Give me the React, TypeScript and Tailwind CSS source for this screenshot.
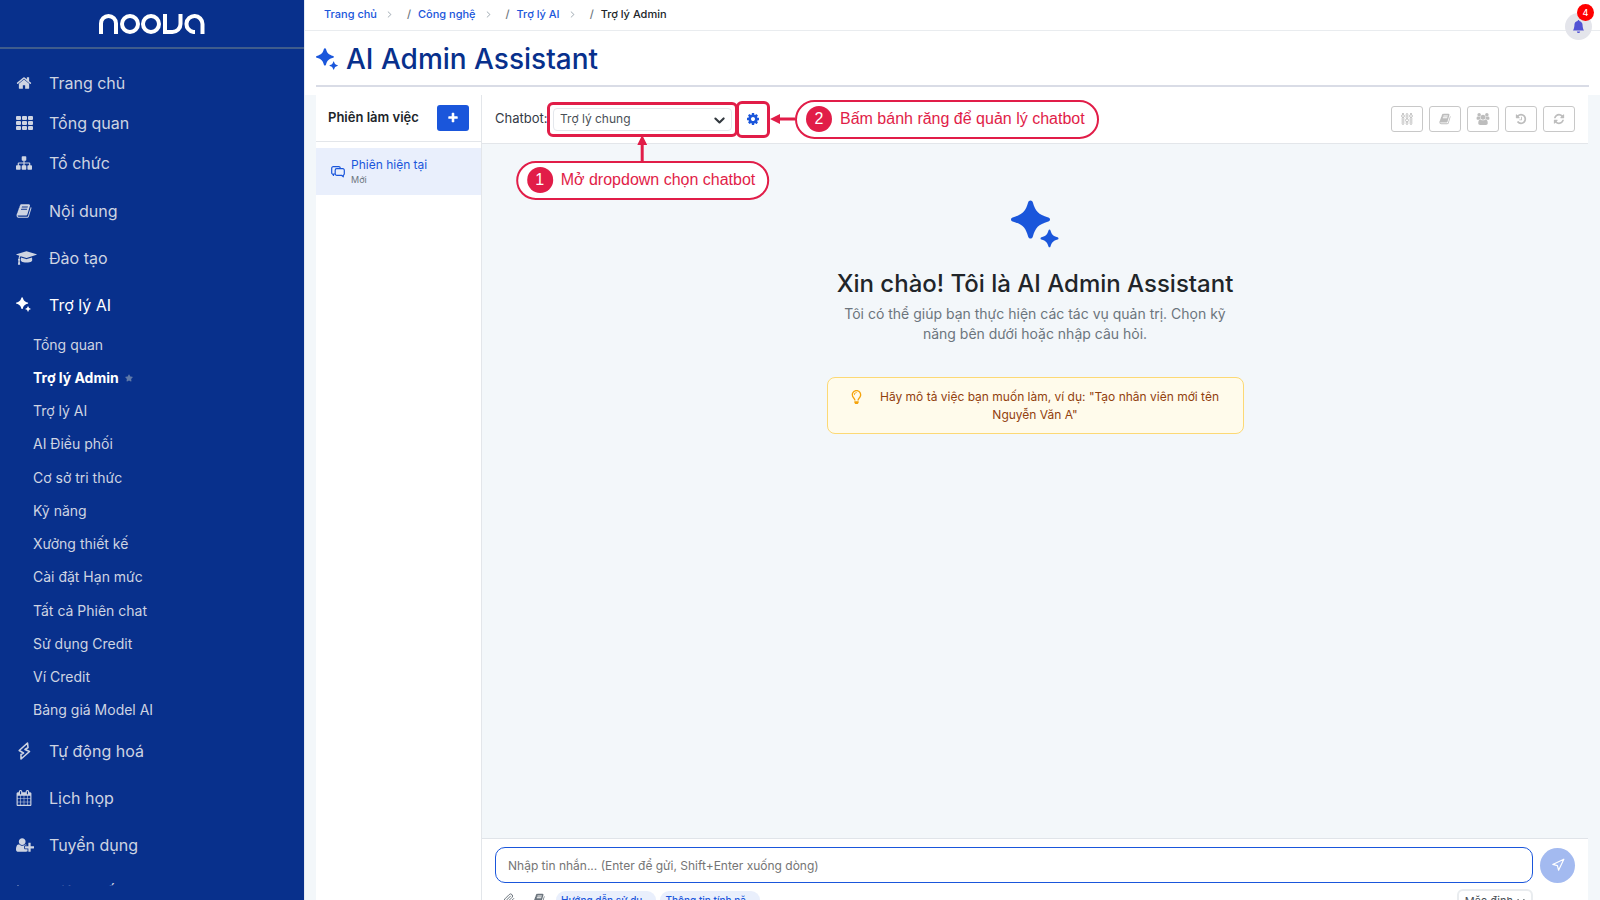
import { useState } from "react";
import type { ReactNode } from "react";
import { BsBellFill, BsChevronDown, BsChevronRight } from "react-icons/bs";
import { FaRegLightbulb, FaStar } from "react-icons/fa";
import { LuChartLine, LuNavigation, LuPaperclip } from "react-icons/lu";

const paths = {
  home: "M1472 992v480q0 26-19 45t-45 19h-384v-384h-256v384h-384q-26 0-45-19t-19-45v-480q0-1 .5-3t.5-3l575-474 575 474q1 2 1 6zm223-69l-62 74q-8 9-21 11h-3q-13 0-21-7l-692-577-692 577q-12 8-24 7-13-2-21-11l-62-74q-8-10-7-23.5t11-21.5l719-599q32-26 76-26t76 26l244 204v-195q0-14 9-23t23-9h192q14 0 23 9t9 23v408l219 182q10 8 11 21.5t-7 23.5z",
  plus: "M1600 736v192q0 40-28 68t-68 28h-416v416q0 40-28 68t-68 28h-192q-40 0-68-28t-28-68v-416h-416q-40 0-68-28t-28-68v-192q0-40 28-68t68-28h416v-416q0-40 28-68t68-28h192q40 0 68 28t28 68v416h416q40 0 68 28t28 68z",
  sitemap:
    "M1792 1248v320q0 40-28 68t-68 28h-320q-40 0-68-28t-28-68v-320q0-40 28-68t68-28h96v-192h-512v192h96q40 0 68 28t28 68v320q0 40-28 68t-68 28h-320q-40 0-68-28t-28-68v-320q0-40 28-68t68-28h96v-192h-512v192h96q40 0 68 28t28 68v320q0 40-28 68t-68 28h-320q-40 0-68-28t-28-68v-320q0-40 28-68t68-28h96v-192q0-52 38-90t90-38h512v-192h-96q-40 0-68-28t-28-68v-320q0-40 28-68t68-28h320q40 0 68 28t28 68v320q0 40-28 68t-68 28h-96v192h512q52 0 90 38t38 90v192h96q40 0 68 28t28 68z",
  book: "M1703 478q40 57 18 129l-275 906q-19 64-76.5 107.5t-122.5 43.5h-923q-77 0-148.5-53.5t-99.5-131.5q-24-67-2-127 0-4 3-27t4-37q1-8-3-21.5t-3-19.5q2-11 8-21t16.5-23.5 16.5-23.5q23-38 45-91.5t30-91.5q3-10 .5-30t-.5-28q3-11 17-28t17-23q21-36 42-92t25-90q1-9-2.5-32t.5-28q4-13 22-30.5t22-22.5q19-26 42.5-84.5t27.5-96.5q1-8-3-25.5t-2-26.5q2-8 9-18t18-23 17-21q8-12 16.5-30.5t15-35 16-36 19.5-32 26.5-23.5 36-11.5 47.5 5.5l-1 3q38-9 51-9h761q74 0 114 56t18 130l-274 906q-36 119-71.5 153.5t-128.5 34.5h-869q-27 0-38 15-11 16-1 43 24 70 144 70h923q29 0 56-15.5t35-41.5l300-987q7-22 5-57 38 15 59 43zm-1064 2q-4 13 2 22.5t20 9.5h608q13 0 25.5-9.5t16.5-22.5l21-64q4-13-2-22.5t-20-9.5h-608q-13 0-25.5 9.5t-16.5 22.5zm-83 256q-4 13 2 22.5t20 9.5h608q13 0 25.5-9.5t16.5-22.5l21-64q4-13-2-22.5t-20-9.5h-608q-13 0-25.5 9.5t-16.5 22.5z",
  cap: "M1774 836l18 316q4 69-82 128t-235 93.5-323 34.5-323-34.5-235-93.5-82-128l18-316 574 181q22 7 48 7t48-7zm530-324q0 23-22 31l-1120 352q-4 1-10 1t-10-1l-652-206q-43 34-71 111.5t-34 178.5q63 36 63 109 0 69-58 107l58 433q2 14-8 25-9 11-24 11h-192q-15 0-24-11-10-11-8-25l58-433q-58-38-58-107 0-73 65-111 11-207 98-330l-333-104q-22-8-22-31t22-31l1120-352q4-1 10-1t10 1l1120 352q22 8 22 31z",
  calendar:
    "M192 1664h288v-288h-288v288zm352 0h320v-288h-320v288zm-352-352h288v-320h-288v320zm352 0h320v-320h-320v320zm-352-384h288v-288h-288v288zm736 736h320v-288h-320v288zm-384-736h320v-288h-320v288zm768 736h288v-288h-288v288zm-384-352h320v-320h-320v320zm-352-864v-288q0-13-9.5-22.5t-22.5-9.5h-64q-13 0-22.5 9.5t-9.5 22.5v288q0 13 9.5 22.5t22.5 9.5h64q13 0 22.5-9.5t9.5-22.5zm736 864h288v-320h-288v320zm-384-384h320v-288h-320v288zm384 0h288v-288h-288v288zm32-480v-288q0-13-9.5-22.5t-22.5-9.5h-64q-13 0-22.5 9.5t-9.5 22.5v288q0 13 9.5 22.5t22.5 9.5h64q13 0 22.5-9.5t9.5-22.5zm384-64v1280q0 52-38 90t-90 38h-1408q-52 0-90-38t-38-90v-1280q0-52 38-90t90-38h128v-96q0-66 47-113t113-47h64q66 0 113 47t47 113v96h384v-96q0-66 47-113t113-47h64q66 0 113 47t47 113v96h128q52 0 90 38t38 90z",
  userPlus:
    "M704 896q-159 0-271.5-112.5t-112.5-271.5 112.5-271.5 271.5-112.5 271.5 112.5 112.5 271.5-112.5 271.5-271.5 112.5zm960 128h352q13 0 22.5 9.5t9.5 22.5v192q0 13-9.5 22.5t-22.5 9.5h-352v352q0 13-9.5 22.5t-22.5 9.5h-192q-13 0-22.5-9.5t-9.5-22.5v-352h-352q-13 0-22.5-9.5t-9.5-22.5v-192q0-13 9.5-22.5t22.5-9.5h352v-352q0-13 9.5-22.5t22.5-9.5h192q13 0 22.5 9.5t9.5 22.5v352zm-736 224q0 52 38 90t90 38h256v238q-68 50-171 50h-874q-121 0-194-69t-73-190q0-53 3.5-103.5t14-109 26.5-108.5 43-97.5 62-81 85.5-53.5 111.5-20q19 0 39 17 79 61 154.5 91.5t164.5 30.5 164.5-30.5 154.5-91.5q20-17 39-17 132 0 217 96h-223q-52 0-90 38t-38 90v192z",
  cog: "M1152 896q0-106-75-181t-181-75-181 75-75 181 75 181 181 75 181-75 75-181zm512-109v222q0 12-8 23t-20 13l-185 28q-19 54-39 91 35 50 107 138 10 12 10 25t-9 23q-27 37-99 108t-94 71q-12 0-26-9l-138-108q-44 23-91 38-16 136-29 186-7 28-36 28h-222q-14 0-24.5-8.5t-11.5-21.5l-28-184q-49-16-90-37l-141 107q-10 9-25 9-14 0-25-11-126-114-165-168-7-10-7-23 0-12 8-23 15-21 51-66.5t54-70.5q-27-50-41-99l-183-27q-13-2-21-12.5t-8-23.5v-222q0-12 8-23t19-13l186-28q14-46 39-92-40-57-107-138-10-12-10-24 0-10 9-23 26-36 98.5-107.5t94.5-71.5q13 0 26 10l138 107q44-23 91-38 16-136 29-186 7-28 36-28h222q14 0 24.5 8.5t11.5 21.5l28 184q49 16 90 37l142-107q9-9 24-9 13 0 25 10 129 119 165 170 7 8 7 22 0 12-8 23-15 21-51 66.5t-54 70.5q26 50 41 98l183 28q13 2 21 12.5t8 23.5z",
  refresh:
    "M1639 1056q0 5-1 7-64 268-268 434.5t-478 166.5q-146 0-282.5-55t-243.5-157l-129 129q-19 19-45 19t-45-19-19-45v-448q0-26 19-45t45-19h448q26 0 45 19t19 45-19 45l-137 137q71 66 161 102t187 36q134 0 250-65t186-179q11-17 53-117 8-23 30-23h192q13 0 22.5 9.5t9.5 22.5zm25-800v448q0 26-19 45t-45 19h-448q-26 0-45-19t-19-45 19-45l138-138q-148-137-349-137-134 0-250 65t-186 179q-11 17-53 117-8 23-30 23h-199q-13 0-22.5-9.5t-9.5-22.5v-7q65-268 270-434.5t480-166.5q146 0 284 55.5t245 156.5l130-129q19-19 45-19t45 19 19 45z",
  history:
    "M1664 896q0 156-61 298t-164 245-245 164-298 61q-172 0-327-72.5t-264-204.5q-7-10-6.5-22.5t8.5-20.5l137-138q10-9 25-9 16 2 23 12 73 95 179 147t225 52q104 0 198.5-40.5t163.5-109.5 109.5-163.5 40.5-198.5-40.5-198.5-109.5-163.5-163.5-109.5-198.5-40.5q-98 0-188 35.5t-160 101.5l137 138q31 30 14 69-17 40-59 40h-448q-26 0-45-19t-19-45v-448q0-42 40-59 39-17 69 14l130 129q107-101 244.5-156.5t284.5-55.5q156 0 298 61t245 164 164 245 61 298zm-640-288v448q0 14-9 23t-23 9h-320q-14 0-23-9t-9-23v-64q0-14 9-23t23-9h224v-352q0-14 9-23t23-9h64q14 0 23 9t9 23z",
  users:
    "M657 896q-162 5-265 128h-134q-82 0-138-40.5t-56-118.5q0-353 124-353 6 0 43.5 21t97.5 42.5 119 21.5q67 0 133-23-5 37-5 66 0 139 81 256zm1071 637q0 120-73 189.5t-194 69.5h-874q-121 0-194-69.5t-73-189.5q0-53 3.5-103.5t14-109 26.5-108.5 43-97.5 62-81 85.5-53.5 111.5-20q10 0 43 21.5t73 48 107 48 135 21.5 135-21.5 107-48 73-48 43-21.5q61 0 111.5 20t85.5 53.5 62 81 43 97.5 26.5 108.5 14 109 3.5 103.5zm-1024-1277q0 106-75 181t-181 75-181-75-75-181 75-181 181-75 181 75 75 181zm704 384q0 159-112.5 271.5t-271.5 112.5-271.5-112.5-112.5-271.5 112.5-271.5 271.5-112.5 271.5 112.5 112.5 271.5zm576 225q0 78-56 118.5t-138 40.5h-134q-103-123-265-128 81-117 81-256 0-29-5-66 66 23 133 23 59 0 119-21.5t97.5-42.5 43.5-21q124 0 124 353zm-128-609q0 106-75 181t-181 75-181-75-75-181 75-181 181-75 181 75 75 181z",
};

interface GlyphProps {
  name: keyof typeof paths;
  width?: number;
  className?: string;
}

function Glyph({ name, width = 1792, className }: GlyphProps) {
  return (
    <svg viewBox={`0 0 ${width} 1792`} className={className} fill="currentColor" aria-hidden="true">
      <path d={paths[name]} />
    </svg>
  );
}

function Sparkles({ className }: { className?: string }) {
  return (
    <svg viewBox="0 0 48 48" className={className} fill="currentColor" aria-hidden="true">
      <path d="M19.500 0.500c1.200 0 1.900.700 2.300 1.800 2.700 9.100 5.200 12.100 15.500 15.200 1 .3 1.700 1 1.700 2s-.7 1.700-1.700 2c-10.300 3.100-12.800 6.100-15.500 15.200-.4 1.100-1.100 1.800-2.300 1.800s-1.900-.7-2.300-1.800c-2.700-9.100-5.200-12.100-15.500-15.200-1-.3-1.700-1-1.700-2s.7-1.700 1.700-2c10.300-3.100 12.800-6.100 15.500-15.200.4-1.100 1.100-1.800 2.300-1.800z" />
      <path d="M38.500 29.500c.5 0 .8.300 1 .9 1.400 4.300 2.500 5.400 7.100 6.900.6.200.9.600.9 1.100s-.3.900-.9 1.100c-4.600 1.500-5.700 2.600-7.100 6.900-.2.600-.5.900-1 .9s-.8-.3-1-.9c-1.400-4.300-2.500-5.400-7.100-6.900-.6-.2-.9-.6-.9-1.100s.3-.9.900-1.100c4.600-1.500 5.700-2.600 7.100-6.900.2-.6.500-.9 1-.9z" />
    </svg>
  );
}

function GridIcon() {
  return (
    <svg viewBox="0 0 17 14" className="w-[17px] h-[14px]" fill="currentColor" aria-hidden="true">
      {[0, 5, 10].map((y) =>
        [0, 6, 12].map((x) => <rect key={`${x}-${y}`} x={x} y={y} width="5" height="4" rx="1" />),
      )}
    </svg>
  );
}

function BoltIcon() {
  return (
    <svg viewBox="0 0 16 18" className="w-4 h-[18px]" fill="none" stroke="currentColor" strokeWidth="1.600" strokeLinejoin="round" aria-hidden="true">
      <path d="M11.500 1 3.200 8.500 7.500 11l-2.500 1.500v4.500L13.500 9.500 9 7.500l3-2z" />
    </svg>
  );
}

function ChatsIcon() {
  return (
    <svg viewBox="0 0 14 12" className="w-[14px] h-3" fill="none" stroke="currentColor" strokeWidth="1.200" strokeLinejoin="round" aria-hidden="true">
      <path d="M4 8H2.500v1.500L1.500 8A1 1 0 0 1 .700 7V2.200A1.500 1.500 0 0 1 2.200.700h5.600A1.500 1.500 0 0 1 9.300 2" />
      <path d="M5.700 2.700h6.100a1.500 1.500 0 0 1 1.500 1.500v3.600a1.500 1.500 0 0 1-1 1.400v1.600L10.500 9.300H5.700a1.500 1.500 0 0 1-1.500-1.500V4.200a1.500 1.500 0 0 1 1.500-1.500z" />
    </svg>
  );
}

function SlidersIcon() {
  return (
    <svg viewBox="0 0 12 12" className="w-3 h-3" fill="none" stroke="currentColor" strokeWidth="0.900" aria-hidden="true">
      <rect x="1.200" y="4.500" width="1.600" height="7" rx="0.800" />
      <rect x="5.200" y="0.500" width="1.600" height="5" rx="0.800" />
      <rect x="5.200" y="9" width="1.600" height="2.500" rx="0.800" />
      <rect x="9.200" y="4.500" width="1.600" height="7" rx="0.800" />
      <path d="M2 0v1.500M10 0v1.500" strokeWidth="1.600" />
      <circle cx="2" cy="3" r="1.400" />
      <circle cx="6" cy="7.300" r="1.500" />
      <circle cx="10" cy="3" r="1.400" />
    </svg>
  );
}

function Logo() {
  return (
    <svg viewBox="0 0 106 20" className="w-[106px] h-5" fill="none" stroke="white" strokeWidth="4" role="img" aria-label="noova">
      <path d="M2 20V9.500a7.500 7.500 0 0 1 15 0V20" />
      <circle cx="31" cy="10" r="8" />
      <circle cx="52" cy="10" r="8" />
      <path d="M66 0v18h7.500a8 8 0 0 0 8-8V0" />
      <path d="M96 18h-1.500a8 8 0 1 1 9-8v10" />
    </svg>
  );
}

interface MenuItem {
  label: string;
  icon: ReactNode;
}

const topMenu: MenuItem[] = [
  { label: "Trang chủ", icon: <Glyph name="home" className="w-4 h-4" /> },
  { label: "Tổng quan", icon: <GridIcon /> },
  { label: "Tổ chức", icon: <Glyph name="sitemap" className="w-4 h-4" /> },
];

const contentMenu: MenuItem[] = [
  { label: "Nội dung", icon: <Glyph name="book" className="w-4 h-4" /> },
  { label: "Đào tạo", icon: <Glyph name="cap" width={2304} className="w-[21px] h-4" /> },
  { label: "Trợ lý AI", icon: <Sparkles className="w-[15px] h-[15px]" /> },
];

const assistantMenu = [
  "Tổng quan",
  "Trợ lý Admin",
  "Trợ lý AI",
  "AI Điều phối",
  "Cơ sở tri thức",
  "Kỹ năng",
  "Xưởng thiết kế",
  "Cài đặt Hạn mức",
  "Tất cả Phiên chat",
  "Sử dụng Credit",
  "Ví Credit",
  "Bảng giá Model AI",
];

const bottomMenu: MenuItem[] = [
  { label: "Tự động hoá", icon: <BoltIcon /> },
  { label: "Lịch họp", icon: <Glyph name="calendar" className="w-4 h-4" /> },
  { label: "Tuyển dụng", icon: <Glyph name="userPlus" width={2048} className="w-[18px] h-4" /> },
  { label: "Hiệu suất", icon: <LuChartLine className="w-4 h-4" /> },
];

const crumbs = ["Trang chủ", "Công nghệ", "Trợ lý AI"];

const toolbar = [
  { label: "Tuỳ chỉnh", icon: <SlidersIcon /> },
  { label: "Tài liệu", icon: <Glyph name="book" className="w-3 h-3" /> },
  { label: "Nhóm", icon: <Glyph name="users" width={2048} className="w-[14px] h-3" /> },
  { label: "Lịch sử", icon: <Glyph name="history" className="w-3 h-3" /> },
  { label: "Làm mới", icon: <Glyph name="refresh" className="w-3 h-3" /> },
];

function MenuLink({ item, size }: { item: MenuItem; size: "compact" | "regular" }) {
  const active = item.label === "Trợ lý AI";
  return (
    <li>
      <a
        href="#"
        className={`flex items-center pl-4 text-base ${size === "compact" ? "h-10" : "h-[47px]"} ${active ? "text-white" : "text-[#ced4e2]"}`}
      >
        <span className="w-[33px] shrink-0">{item.icon}</span>
        {item.label}
      </a>
    </li>
  );
}

function Sidebar() {
  return (
    <aside className="w-[304px] shrink-0 flex flex-col bg-[#08308c] pb-[14px]">
      <div className="h-[49px] shrink-0 flex items-center justify-center border-b-2 border-[#3f5c8c]">
        <Logo />
      </div>
      <nav className="flex-1 min-h-0 overflow-hidden pt-[14px]">
        <ul>
          {topMenu.map((item) => (
            <MenuLink key={item.label} item={item} size="compact" />
          ))}
        </ul>
        <ul className="mt-1">
          {contentMenu.map((item) => (
            <MenuLink key={item.label} item={item} size="regular" />
          ))}
        </ul>
        <ul className="h-[399px] grid auto-rows-fr">
          {assistantMenu.map((label) => (
            <li key={label} className="flex items-center gap-[6px] pl-[33px] text-sm text-[#ced4e2]">
              <a href="#" className={label === "Trợ lý Admin" ? "font-bold text-white" : ""}>
                {label}
              </a>
              {label === "Trợ lý Admin" && <FaStar className="w-2 h-2 text-[#5f79a8]" />}
            </li>
          ))}
        </ul>
        <ul>
          {bottomMenu.map((item) => (
            <MenuLink key={item.label} item={item} size="regular" />
          ))}
        </ul>
      </nav>
    </aside>
  );
}

function Callout({ step, children }: { step: number; children: ReactNode }) {
  return (
    <div className="h-[39px] flex items-center gap-2 pl-[9px] pr-3 rounded-full border-2 border-[#e11d48] bg-white whitespace-nowrap font-['Liberation_Sans',sans-serif] text-base text-[#e11d48]">
      <span className="w-[26px] h-[26px] flex items-center justify-center rounded-full bg-[#e11d48] text-white">
        {step}
      </span>
      {children}
    </div>
  );
}

function ChatbotPicker() {
  const [bot, setBot] = useState("general");

  return (
    <div className="flex items-center">
      <label htmlFor="chatbot" className="w-[52px] text-[13px] text-[#343a46]">
        Chatbot:
      </label>
      {/* Step 1: chatbot dropdown */}
      <div className="relative w-[191px] h-[35px] p-[3px] rounded-md border-3 border-[#e11d48]">
        <select
          id="chatbot"
          value={bot}
          onChange={(e) => setBot(e.target.value)}
          className="block w-full h-full appearance-none rounded border border-[#e4e7ec] bg-white pl-[6px] text-xs text-[#495057]"
        >
          <option value="general">Trợ lý chung</option>
        </select>
        <BsChevronDown className="absolute right-[10px] top-[10px] w-[11px] h-[11px] stroke-2 text-[#343a40] pointer-events-none" />
        <div className="absolute z-10 top-full left-1/2 -translate-x-1/2 flex flex-col items-center">
          <svg viewBox="0 0 10 27" className="w-[10px] h-[27px]" fill="#e11d48" aria-hidden="true">
            <path d="M5 1l5 10H6.500v16h-3V11H0z" />
          </svg>
          <Callout step={1}>Mở dropdown chọn chatbot</Callout>
        </div>
      </div>
      {/* Step 2: chatbot settings */}
      <div className="relative -ml-[2px] w-[34px] h-[37px] rounded-md border-3 border-[#e11d48]">
        <button type="button" aria-label="Quản lý chatbot" className="w-full h-full flex items-center justify-center text-[#1a56db]">
          <Glyph name="cog" className="w-[14px] h-[14px]" />
        </button>
        <div className="absolute z-10 left-full inset-y-0 flex items-center">
          <svg viewBox="0 0 28 10" className="w-7 h-[10px]" fill="#e11d48" aria-hidden="true">
            <path d="M3 5l10-5v3.500h15v3H13V10z" />
          </svg>
          <Callout step={2}>Bấm bánh răng để quản lý chatbot</Callout>
        </div>
      </div>
    </div>
  );
}

function Sessions() {
  return (
    <section className="w-[166px] shrink-0 border-r border-[#e3e6ea] bg-white">
      <div className="h-[47px] flex items-center justify-between px-3 border-b border-[#e3e6ea]">
        <h2 className="text-[13px] font-semibold text-[#212529]">Phiên làm việc</h2>
        <button type="button" aria-label="Thêm phiên" className="w-8 h-[26px] flex items-center justify-center rounded-[3px] bg-[#1a56db] text-white">
          <Glyph name="plus" className="w-3 h-3" />
        </button>
      </div>
      <button type="button" className="mt-[6px] w-full h-[47px] flex items-center gap-[6px] pl-[15px] bg-[#e9effc] text-left text-[#1a56db]">
        <ChatsIcon />
        <span className="flex flex-col">
          <span className="text-xs leading-4">Phiên hiện tại</span>
          <span className="text-[9px] leading-[13px] text-[#6c757d]">Mới</span>
        </span>
      </button>
    </section>
  );
}

function Composer() {
  const [message, setMessage] = useState("");

  return (
    <form className="h-[86px] shrink-0 border-t border-[#e0e4e9] bg-white px-[13px] pt-2" onSubmit={(e) => e.preventDefault()}>
      <div className="flex items-center gap-[7px]">
        <input
          type="text"
          aria-label="Tin nhắn"
          value={message}
          onChange={(e) => setMessage(e.target.value)}
          placeholder="Nhập tin nhắn... (Enter để gửi, Shift+Enter xuống dòng)"
          className="flex-1 min-w-0 h-9 px-3 rounded-[10px] border border-[#1a56db] text-xs text-[#212529] placeholder:text-[#757575] outline-none"
        />
        <button type="submit" aria-label="Gửi" className="w-[35px] h-[35px] flex items-center justify-center rounded-full bg-[#a3baf0] text-white">
          <LuNavigation className="w-[14px] h-[14px]" />
        </button>
      </div>
      <div className="mt-[6px] mr-[42px] flex items-start justify-between">
        <div className="flex items-start gap-1 pl-2 pt-[2px] text-[10px] font-medium text-[#1a56db]">
          <LuPaperclip className="mt-[2px] w-3 h-3 text-[#6c757d]" />
          <Glyph name="book" className="mt-[2px] ml-[14px] mr-[7px] w-3 h-3 text-[#6c757d]" />
          <span className="h-[18px] px-[5px] rounded-full bg-[#e9effc] leading-[18px]">Hướng dẫn sử dụ...</span>
          <span className="h-[18px] px-[5px] rounded-full bg-[#e9effc] leading-[18px]">Thông tin tính nă...</span>
        </div>
        <button type="button" className="h-6 px-[6px] flex items-center gap-1 rounded-md border-2 border-[#e9ecef] text-[11px] text-[#495057]">
          Mặc định
          <BsChevronDown className="w-2 h-2 stroke-1" />
        </button>
      </div>
    </form>
  );
}

export default function App() {
  return (
    <div className="h-screen flex overflow-hidden bg-[#f3f7fa] font-[Inter,'Noto_Sans',sans-serif]">
      <Sidebar />

      <main className="flex-1 min-w-0 border-l border-[#e4e9f2]">
        <header className="relative h-[95px] bg-white">
          <nav aria-label="Breadcrumb" className="h-[31px] border-b border-[#e9ecef] pl-[19px]">
            <ol className="h-[29px] flex items-center text-[11px] font-medium">
              {crumbs.map((crumb) => (
                <li key={crumb} className="flex items-center">
                  <a href="#" className="text-[#1a56db]">
                    {crumb}
                  </a>
                  <BsChevronRight className="ml-[9px] mr-[14px] w-[7px] h-[7px] stroke-1 text-[#adb5bd]" />
                  <span className="w-[11px] text-[#6c757d]">/</span>
                </li>
              ))}
              <li className="text-[#212529]">Trợ lý Admin</li>
            </ol>
          </nav>
          <div className="mx-[11px] h-14 pt-[2px] flex items-center gap-2 border-b-2 border-[#d9dce6]">
            <Sparkles className="w-[22px] h-[22px] text-[#1a56db]" />
            <h1 className="text-[28px] font-medium text-[#08308c]">AI Admin Assistant</h1>
          </div>
          <button type="button" aria-label="Thông báo" className="absolute right-2 top-[13px] w-[27px] h-[27px] flex items-center justify-center rounded-full bg-[#e4e5eb] text-[#5252d4]">
            <BsBellFill className="w-[13px] h-[13px]" />
            <span className="absolute -top-[9px] -right-[2px] w-[17px] h-[17px] rounded-full bg-[#ff0000] text-[9px] leading-[17px] font-medium text-white">
              4
            </span>
          </button>
        </header>

        <div className="ml-[11px] mr-3 h-[calc(100vh-71px)] flex">
          <Sessions />

          <section className="flex-1 min-w-0 flex flex-col">
            <div className="h-[49px] shrink-0 flex items-center justify-between px-[13px] border-b border-[#e3e6ea] bg-white">
              <ChatbotPicker />
              <div className="flex gap-[6px]">
                {toolbar.map((tool) => (
                  <button
                    key={tool.label}
                    type="button"
                    aria-label={tool.label}
                    disabled
                    className="w-8 h-[26px] flex items-center justify-center rounded-[3px] border border-[#c8c8c8] text-[#bdbdbd]"
                  >
                    {tool.icon}
                  </button>
                ))}
              </div>
            </div>

            <div className="flex-1 flex flex-col items-center pt-14 text-center">
              <Sparkles className="w-12 h-12 text-[#1a56db]" />
              <h2 className="mt-[18px] text-2xl leading-9 font-medium text-[#212529]">
                Xin chào! Tôi là AI Admin Assistant
              </h2>
              <p className="mt-[2px] w-[400px] text-sm leading-5 text-[#6c757d]">
                Tôi có thể giúp bạn thực hiện các tác vụ quản trị. Chọn kỹ năng bên dưới hoặc nhập câu hỏi.
              </p>
              <p className="mt-[33px] w-[417px] h-[57px] px-4 pt-[10px] rounded-lg border border-[#fcd975] bg-[#fffbeb] text-xs leading-[18px] text-[#923f0e]">
                <FaRegLightbulb className="inline mr-[18px] w-[11px] h-[14px] align-text-bottom text-[#f5a30b]" />
                Hãy mô tả việc bạn muốn làm, ví dụ: "Tạo nhân viên mới tên Nguyễn Văn A"
              </p>
            </div>

            <Composer />
          </section>
        </div>
      </main>
    </div>
  );
}
